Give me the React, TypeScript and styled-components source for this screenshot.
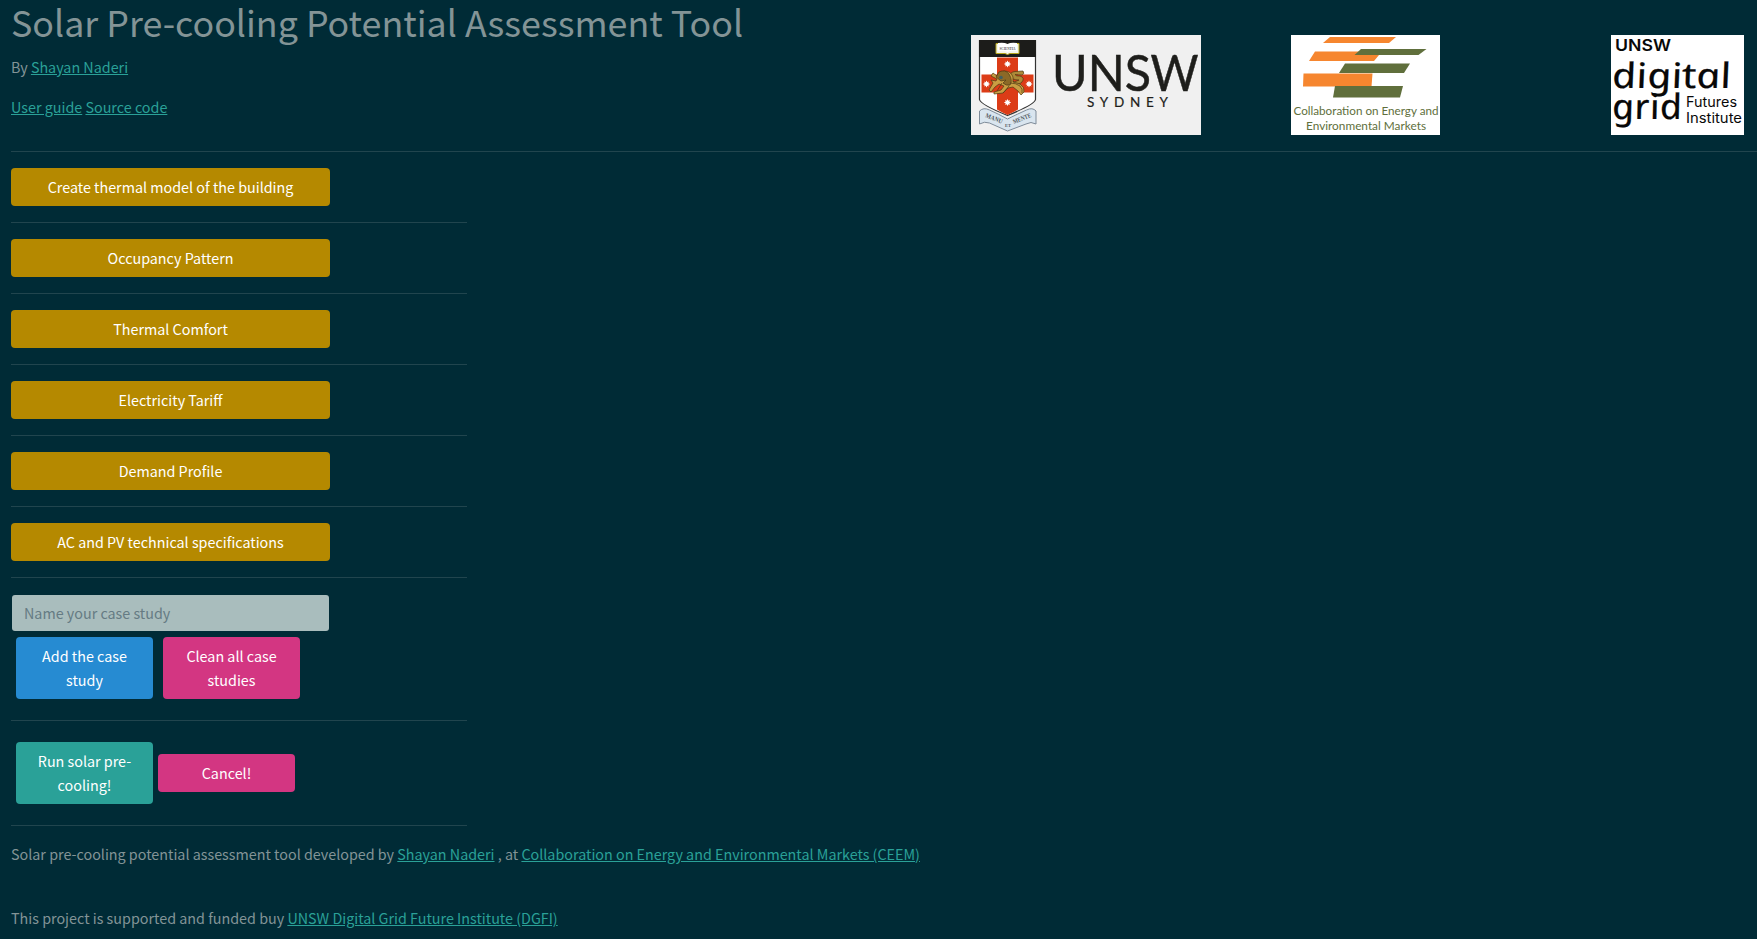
import React from "react";
import styled, { createGlobalStyle } from "styled-components";

const GlobalStyle = createGlobalStyle`
  * { box-sizing: border-box; }
  body {
    margin: 0;
    background: #002b36;
    color: #839496;
    font-family: "Noto Sans CJK SC", "Noto Sans", sans-serif;
    font-size: 14.34px;
    line-height: 24px;
    overflow: hidden;
  }
`;

const Page = styled.div`
  padding-left: 11px;
  height: 939px;
  overflow: hidden;
`;

const Header = styled.header`
  display: grid;
  grid-template-columns: 960px 320px 320px 1fr;
  height: 151px;
`;

const Title = styled.h1`
  margin: 0 0 13px;
  font-size: 35.8px;
  font-weight: 400;
  line-height: 42px;
  white-space: nowrap;
`;

const Paragraph = styled.p<{ $gap?: number }>`
  margin: 0 0 ${(p) => p.$gap ?? 16}px;
  white-space: nowrap;
`;

const Link = styled.a`
  color: #2aa198;
  text-decoration: underline;
`;

const LogoCell = styled.div`
  padding-top: 35px;
  svg { display: block; }
`;

const Rule = styled.hr`
  margin: 0 0 16px;
  border: 0;
  height: 1px;
  background: #21454e;
`;

const Sidebar = styled.main`
  width: 456px;
`;

const Button = styled.button<{ $color: string; $width?: number }>`
  display: block;
  width: ${(p) => p.$width ?? 137}px;
  min-height: 38px;
  padding: 7px 13px;
  border: 0;
  border-radius: 4px;
  background: ${(p) => p.$color};
  color: #fff;
  font: inherit;
  text-align: center;
`;

const Section = styled.section`
  padding-bottom: 16px;
`;

const NameInput = styled.input`
  display: block;
  width: 317px;
  height: 36px;
  margin: 17px 0 6px 1px;
  padding: 0 12px 2px;
  border: 0;
  border-radius: 3px;
  background: #a9bdbd;
  font: inherit;
  &::placeholder { color: #657b83; opacity: 1; }
`;

const Actions = styled.div<{ $gap: number; $top: number }>`
  display: flex;
  align-items: center;
  gap: ${(p) => p.$gap}px;
  padding: ${(p) => p.$top}px 0 21px 5px;
`;

const steps = [
  "Create thermal model of the building",
  "Occupancy Pattern",
  "Thermal Comfort",
  "Electricity Tariff",
  "Demand Profile",
  "AC and PV technical specifications",
];

const Star = ({ x, y }: { x: number; y: number }) => (
  <path
    transform={`translate(${x} ${y})`}
    fill="#fff"
    d="M0-3.6 .9-1.7 2.6-2.6 1.7-.9 3.6 0 1.7 .9 2.6 2.6 .9 1.7 0 3.6-.9 1.7-2.6 2.6-1.7 .9-3.6 0-1.7-.9-2.6-2.6-.9-1.7Z"
  />
);

const UnswLogo = () => (
  <svg width="230" height="100" viewBox="0 0 230 100">
    <rect width="230" height="100" fill="#f0f0f0" />
    <path d="M8.500 5.500h56v59q-1 5-28 16q-27-11-28-16Z" fill="#fff" stroke="#333" strokeWidth="1.2" />
    <path d="M8 5h57v17H8Z" fill="#1c1c1a" />
    <path d="M26 22.500h21v52q-5 3-10.500 5.500q-5.500-2.500-10.500-5.500Z" fill="#dc3c17" />
    <path d="M10.500 39.500h52v18h-52Z" fill="#dc3c17" />
    <path d="M25 8.500h3l8.500 1 8.500-1h3v10h-9l-2.500 1-2.500-1h-9Z" fill="#f5f5ec" stroke="#b5a51c" strokeWidth="1" />
    <path d="M27 8q6-1 9.500 1q3.500-2 9.500-1v8q-6-1-9.500 1q-3.500-2-9.500-1Z" fill="#fff" />
    <text x="28.500" y="15" fontFamily="Liberation Serif, serif" fontSize="4.800" fontWeight="700" textLength="16" lengthAdjust="spacingAndGlyphs" fill="#555">SCIENTIA</text>
    <Star x={36.5} y={29} />
    <Star x={15.5} y={49} />
    <Star x={58} y={49} />
    <Star x={36.5} y={67.5} />
    <g stroke="#4e3b14" strokeWidth=".7" strokeLinejoin="round">
      <path d="M39 46q5 2 9-1q-7 0-9-4q0-4 5-4.500l8-.500q2 3-1 4l-7-.5q1 2 5 1.500q6 2 1 7q-3 2-7 1" fill="#ad8a38" />
      <path d="M26 44 20 41l2-3 4 3 2-3 5-2q7 0 9 6v5l7 2q5 3 4 8l-3 3-3-4-5-4-5 1-5 5-9 1v-2l7-2 3-4-5-2-4 3-4 5-2-2 4-7-2-3 5 1Z" fill="#c99e43" />
      <path d="M28 37q6-3 10 2q4 7 1 11q-4 1-7-2l3-3-5 1-5-4Z" fill="#8b6927" />
      <path d="M39 48q6 0 10 3q3 3 2 7M31 48l-5 8M38 51l-6 7" fill="none" />
    </g>
    <circle cx="30" cy="42.500" r="1.800" fill="#426061" />
    <path d="M8.500 76q4-4 10-1q9 4 18 9q10-5 19-9q6-3 9.500 1v13q-5-3-10 0L36.500 96L18.500 88q-5-2-10 1Z" fill="#d9e5ef" stroke="#7e8b99" strokeWidth="1" />
    <text transform="translate(14 82) rotate(22)" fontFamily="Liberation Serif, serif" fontSize="6.500" fontWeight="700" textLength="18" lengthAdjust="spacingAndGlyphs" fill="#545b61">MANU</text>
    <text x="34" y="91.500" fontFamily="Liberation Serif, serif" fontSize="4.500" fontWeight="700" fill="#545b61">ET</text>
    <text transform="translate(43 89) rotate(-22)" fontFamily="Liberation Serif, serif" fontSize="6.500" fontWeight="700" textLength="19" lengthAdjust="spacingAndGlyphs" fill="#545b61">MENTE</text>
    <g fontFamily="Lato, sans-serif" fill="#1e1e1b">
      <text y="56" fontSize="50" stroke="#1e1e1b" strokeWidth=".5">
        <tspan x="81" textLength="99" lengthAdjust="spacingAndGlyphs">UNS</tspan>
        <tspan x="179.500" textLength="48" lengthAdjust="spacingAndGlyphs">W</tspan>
      </text>
      <text x="116" y="72" fontSize="13.500" textLength="81" stroke="#1e1e1b" strokeWidth=".2">SYDNEY</text>
    </g>
  </svg>
);

const CeemLogo = () => (
  <svg width="149" height="100" viewBox="0 0 149 100">
    <rect width="149" height="100" fill="#fff" />
    <g fill="#f6862f">
      <path d="M39 2h66l-7 6H32Z" />
      <path d="M24 16.500h44L66 20h22l-5 6H18Z" />
      <path d="M12.500 38.500h69l-1 13H12Z" />
    </g>
    <g fill="#606f3c">
      <path d="M70 14h65.500l-8 6H63.500Z" />
      <path d="M54 28.500h65l-6 9.500H48Z" />
      <path d="M44 51h68l-3 11.500H42Z" />
    </g>
    <g fontFamily="Lato, sans-serif" fontSize="11.400" fill="#606f3c">
      <text x="2.500" y="80" textLength="145" lengthAdjust="spacingAndGlyphs">Collaboration on Energy and</text>
      <text x="15" y="95" textLength="120" lengthAdjust="spacingAndGlyphs">Environmental Markets</text>
    </g>
  </svg>
);

const GridLogo = () => (
  <svg width="133" height="100" viewBox="0 0 133 100">
    <rect width="133" height="100" fill="#fff" />
    <g fontFamily="Inter, sans-serif" fill="#080808">
      <text x="4" y="16" fontSize="16" fontWeight="600" textLength="56" lengthAdjust="spacingAndGlyphs">UNSW</text>
      {/* the italic's single-storey letters, skewed upright */}
      <g fontFamily="Noto Sans, sans-serif" fontStyle="italic" fontSize="35" stroke="#080808" strokeWidth=".2">
        <text transform="translate(3 53) skewX(12)" textLength="119" lengthAdjust="spacingAndGlyphs">digital</text>
        <text transform="translate(3 84) skewX(12)" textLength="70" lengthAdjust="spacingAndGlyphs">grid</text>
      </g>
      <text x="75" y="72" fontSize="14" textLength="51" lengthAdjust="spacingAndGlyphs">Futures</text>
      <text x="75" y="88" fontSize="14" textLength="56" lengthAdjust="spacingAndGlyphs">Institute</text>
    </g>
  </svg>
);

export default function App() {
  return (
    <>
      <GlobalStyle />
      <Page>
        <Header>
          <div>
            <Title>Solar Pre-cooling Potential Assessment Tool</Title>
            <Paragraph>By <Link>Shayan Naderi</Link></Paragraph>
            <Paragraph><Link>User guide</Link> <Link>Source code</Link></Paragraph>
          </div>
          <LogoCell><UnswLogo /></LogoCell>
          <LogoCell><CeemLogo /></LogoCell>
          <LogoCell><GridLogo /></LogoCell>
        </Header>
        <Rule />
        <Sidebar>
          {steps.map((step) => (
            <React.Fragment key={step}>
              <Section>
                <Button $color="#b58900" $width={319}>{step}</Button>
              </Section>
              <Rule />
            </React.Fragment>
          ))}
          <NameInput placeholder="Name your case study" />
          <Actions $gap={10} $top={0}>
            <Button $color="#268bd2">Add the case study</Button>
            <Button $color="#d33682">Clean all case studies</Button>
          </Actions>
          <Rule />
          <Actions $gap={5} $top={5}>
            <Button $color="#2aa198">Run solar pre-cooling!</Button>
            <Button $color="#d33682">Cancel!</Button>
          </Actions>
          <Rule />
        </Sidebar>
        <Paragraph $gap={40}>
          Solar pre-cooling potential assessment tool developed by <Link>Shayan Naderi</Link> , at{" "}
          <Link>Collaboration on Energy and Environmental Markets (CEEM)</Link>
        </Paragraph>
        <Paragraph>
          This project is supported and funded buy <Link>UNSW Digital Grid Future Institute (DGFI)</Link>
        </Paragraph>
      </Page>
    </>
  );
}
